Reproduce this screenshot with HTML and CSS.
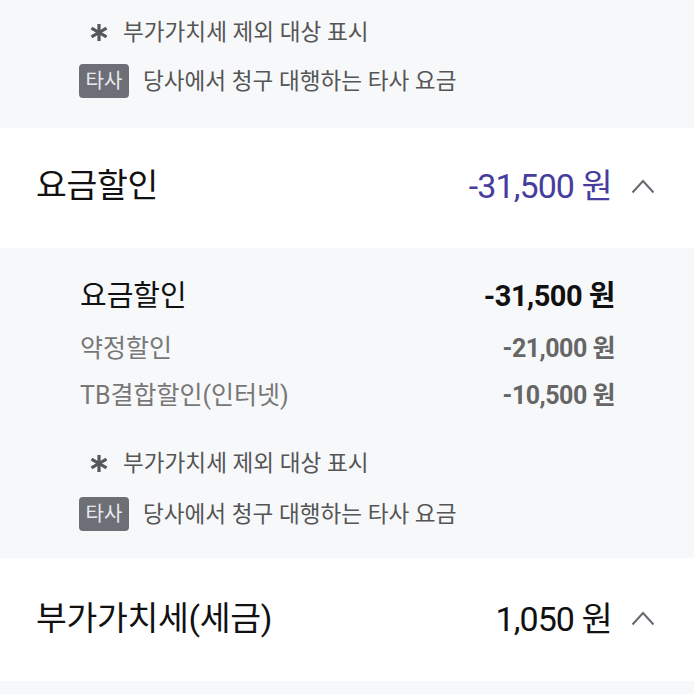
FILE: index.html
```html
<!DOCTYPE html>
<html lang="ko">
<head>
<meta charset="utf-8">
<link rel="stylesheet" href="styles.css">
</head>
<body>
<div class="page">
  <section class="notes-top">
    <div class="note">
      <svg class="ast" width="18" height="17" viewBox="0 0 18 17"><g stroke="#55575d" stroke-width="3.2" stroke-linecap="butt"><line x1="9" y1="0" x2="9" y2="17"/><line x1="1.5" y1="4.2" x2="16.5" y2="12.8"/><line x1="1.5" y1="12.8" x2="16.5" y2="4.2"/></g></svg>
      <span>부가가치세 제외 대상 표시</span>
    </div>
    <div class="note badge-note">
      <span class="badge">타사</span>
      <span>당사에서 청구 대행하는 타사 요금</span>
    </div>
  </section>

  <section class="head head-1">
    <span class="title">요금할인</span>
    <span class="right">
      <span class="amount purple">-31,500 원</span>
      <svg class="chev" width="24" height="15" viewBox="0 0 24 15"><polyline points="1.5,13.5 12,2 22.5,13.5" fill="none" stroke="#666870" stroke-width="2"/></svg>
    </span>
  </section>

  <section class="detail">
    <div class="row row-main">
      <span>요금할인</span>
      <span class="val">-31,500 원</span>
    </div>
    <div class="row row-sub r2">
      <span>약정할인</span>
      <span class="val">-21,000 원</span>
    </div>
    <div class="row row-sub r3">
      <span>TB결합할인(인터넷)</span>
      <span class="val">-10,500 원</span>
    </div>
    <div class="notes-in">
      <div class="note">
        <svg class="ast" width="18" height="17" viewBox="0 0 18 17"><g stroke="#55575d" stroke-width="3.2"><line x1="9" y1="0" x2="9" y2="17"/><line x1="1.5" y1="4.2" x2="16.5" y2="12.8"/><line x1="1.5" y1="12.8" x2="16.5" y2="4.2"/></g></svg>
        <span>부가가치세 제외 대상 표시</span>
      </div>
      <div class="note badge-note2">
        <span class="badge">타사</span>
        <span>당사에서 청구 대행하는 타사 요금</span>
      </div>
    </div>
  </section>

  <section class="head head-2">
    <span class="title">부가가치세(세금)</span>
    <span class="right">
      <span class="amount">1,050 원</span>
      <svg class="chev" width="24" height="15" viewBox="0 0 24 15"><polyline points="1.5,13.5 12,2 22.5,13.5" fill="none" stroke="#666870" stroke-width="2"/></svg>
    </span>
  </section>

  <section class="tail"></section>
</div>
</body>
</html>
```

FILE: styles.css
```css
* { box-sizing: border-box; }
html, body {
  margin: 0;
  padding: 0;
  background: #f7f8fa;
}
body {
  font-family: Roboto, "Noto Sans CJK KR", "Noto Sans", sans-serif;
  color: #111;
}
.page {
  width: 694px;
  overflow: hidden;
}
.notes-top {
  height: 128px;
  padding: 15px 0 0 79px;
  background: #f7f8fa;
}
.note {
  display: flex;
  align-items: center;
  height: 34px;
  line-height: 34px;
  font-size: 22.6px;
  color: #555;
  white-space: nowrap;
}
.note span:last-child { position: relative; top: 1px; }
.note .ast {
  margin-left: 11px;
  margin-right: 15px;
}
.badge-note { margin-top: 15px; }
.badge-note2 { margin-top: 17px; }
.badge {
  display: inline-flex;
  align-items: center;
  justify-content: center;
  width: 50px;
  height: 34px;
  border-radius: 4px;
  background: #6c6f76;
  color: #e9e9ee;
  font-size: 20px;
  margin-right: 14px;
}
.head {
  background: #fff;
  display: flex;
  justify-content: space-between;
  align-items: center;
  padding-left: 36px;
  padding-right: 39px;
  line-height: 40px;
}
.head-1 { height: 120px; padding-bottom: 4px; }
.head-2 { height: 123px; padding-bottom: 2px; }
.title {
  font-size: 33.5px;
  color: #111;
  letter-spacing: -0.3px;
}
.right {
  display: flex;
  align-items: center;
}
.amount {
  font-size: 34px;
  letter-spacing: -0.9px;
  color: #111;
}
.purple { color: #473d9e; }
.chev { margin-left: 19px; }
.detail {
  background: #f7f8fa;
  height: 310px;
  padding: 28px 79px 0 80px;
}
.row {
  display: flex;
  justify-content: space-between;
  align-items: center;
  height: 40px;
  line-height: 40px;
  white-space: nowrap;
}
.row-main { font-size: 29px; color: #111; }
.row-main .val { font-weight: 700; letter-spacing: -0.5px; }
.row-sub { font-size: 25px; color: #777; }
.row-sub .val { font-weight: 700; color: #666; letter-spacing: -0.5px; }
.r2 { margin-top: 13px; }
.r3 { margin-top: 7px; }
.notes-in { margin-top: 30px; margin-left: -1px; }
.tail { height: 20px; background: #f7f8fa; }
```
